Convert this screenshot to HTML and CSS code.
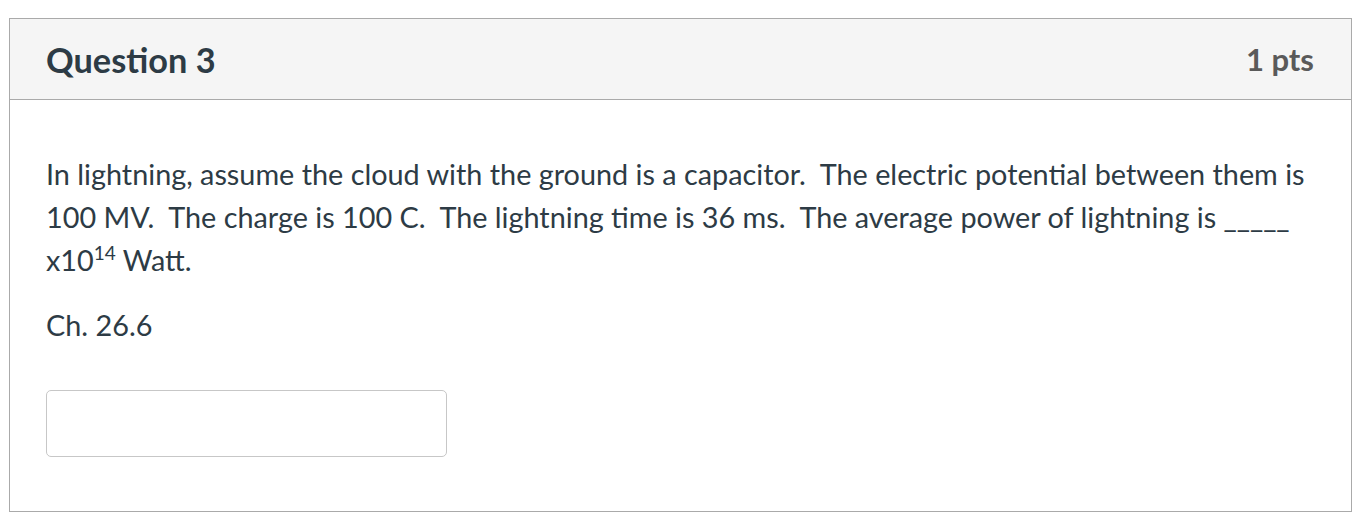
FILE: index.html
```html
<!DOCTYPE html>
<html>
<head>
<meta charset="utf-8">
<link rel="stylesheet" href="styles.css">
</head>
<body>
<div class="question">
  <div class="header">
    <span class="title">Question 3</span>
    <span class="pts">1 pts</span>
  </div>
  <div class="content">
    <p>In lightning, assume the cloud with the ground is a capacitor.&nbsp; The electric potential between them is 100 MV.&nbsp; The charge is 100 C.&nbsp; The lightning time is 36 ms.&nbsp; The average power of lightning is _____ x10<sup>14</sup> Watt.</p>
    <p>Ch. 26.6</p>
    <div class="answer"><input class="field" type="text"></div>
  </div>
</div>
</body>
</html>
```

FILE: styles.css
```css
body {
  margin: 18px 12px 0 9px;
  background: #fff;
  font-family: Lato, "Open Sans", sans-serif;
  color: #2d3b45;
}
.question {
  border: 1px solid #aaaaaa;
  height: 494px;
  box-sizing: border-box;
}
.header {
  display: flex;
  justify-content: space-between;
  align-items: center;
  height: 81px;
  box-sizing: border-box;
  padding: 0 37px 0 36px;
  background: #f5f5f5;
  border-bottom: 1px solid #aaaaaa;
}
.title {
  font-size: 34.3px;
  font-weight: 700;
  color: #2d3b45;
}
.pts {
  font-size: 31px;
  font-weight: 700;
  color: #5a5a5a;
}
.content {
  padding: 53px 36px 0 36px;
  font-size: 28.8px;
  line-height: 43px;
}
.content p {
  margin: 0 0 22px 0;
}
sup {
  font-size: 19px;
  line-height: 0;
}
.answer {
  padding-top: 21px;
}
.field {
  display: block;
  width: 401px;
  height: 67px;
  box-sizing: border-box;
  border: 1px solid #c7c7c7;
  border-radius: 5px;
  margin: 0;
}
```
